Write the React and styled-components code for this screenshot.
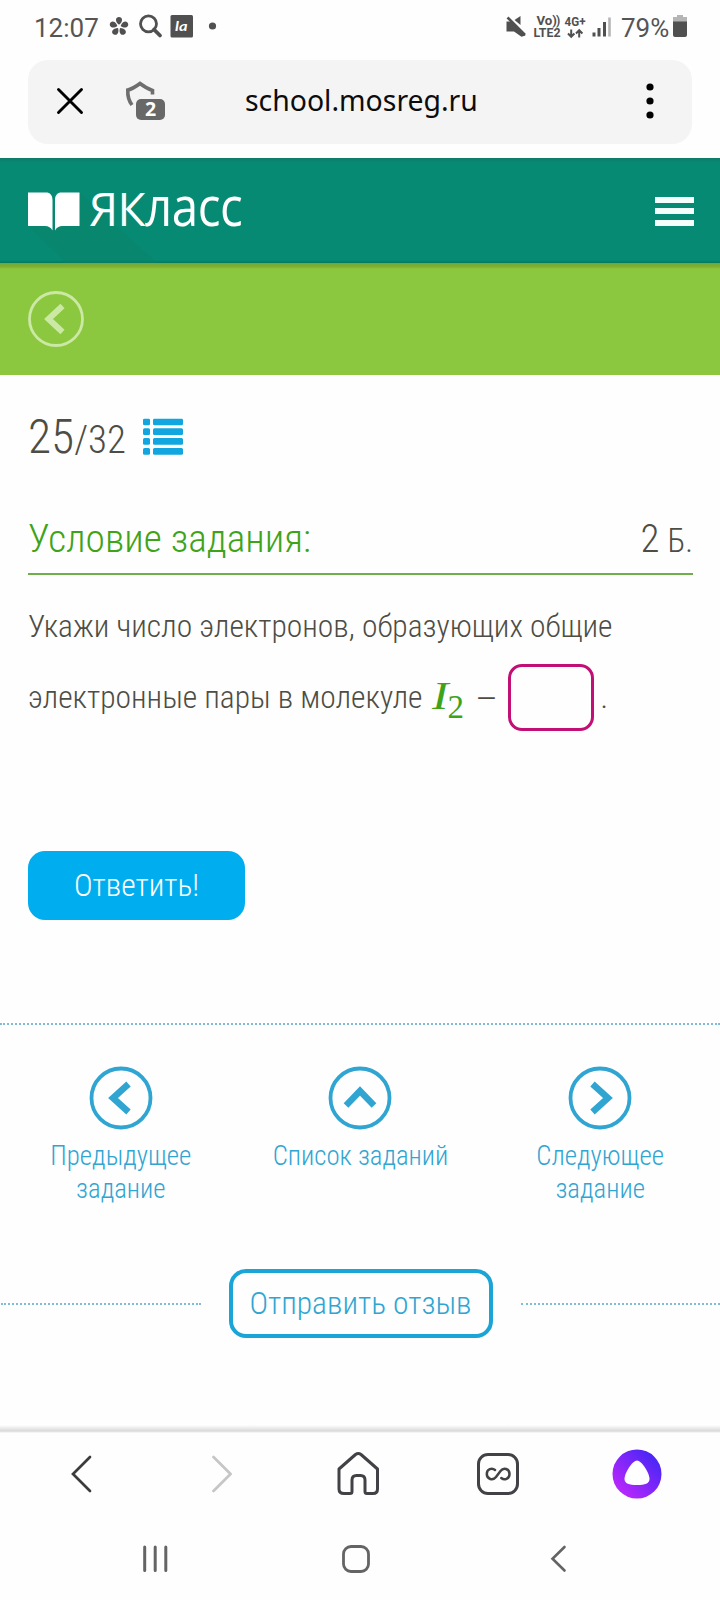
import React from 'react'
import styled, { createGlobalStyle } from 'styled-components';

const GlobalStyle = createGlobalStyle`
  * {
    box-sizing: border-box;
  }
  body {
    margin: 0;
    background: #fefefe;
    font-family: Roboto, sans-serif;
  }
  button {
    padding: 0;
    font-family: inherit;
    cursor: pointer;
  }
  svg {
    display: block;
    flex-shrink: 0;
  }
`

function StatusBar() {
  return (
    <Status>
      <Clock>12:07</Clock>
      <svg width='120' height='32' viewBox='107 10 120 32' fill='#505050'>
        {[0, 72, 144, 216, 288].map((a) => (
          <path key={a} transform={`rotate(${a} 119 26.5)`} d='M119 24.8 C114.6 21.5 115.4 17 119 17 C122.6 17 123.4 21.5 119 24.8 Z' />
        ))}
        <circle cx='148.5' cy='23.8' r='8' fill='none' stroke='#505050' strokeWidth='2.8' />
        <path d='M154 29.5 L160 35.5' stroke='#505050' strokeWidth='3.8' strokeLinecap='round' />
        <rect x='170.5' y='15' width='22.5' height='22.5' rx='1.5' />
        <text x='175' y='31' fill='#fff' fontFamily='Lato, sans-serif' fontWeight='700' fontStyle='italic' fontSize='14' textLength='12.5' lengthAdjust='spacingAndGlyphs'>la</text>
        <circle cx='212.5' cy='26' r='3.6' />
      </svg>
      <Spacer />
      <svg width='110' height='32' viewBox='504.5 10 110 32' fill='#505050'>
        <path d='M507 21.5 H511.5 L526 35.5 L522 36.8 L514.5 31.5 H507 Z' />
        <path d='M515 20 L521 16 V25 Z' />
        <path d='M508 17.5 L525.5 34.8' stroke='#505050' strokeWidth='2.6' />
        <g fontFamily='Roboto, sans-serif' fontWeight='700'>
          <text x='537' y='25' fontSize='12' textLength='20.5' lengthAdjust='spacingAndGlyphs'>Vo)</text>
          <text x='556.5' y='25' fontSize='12'>)</text>
          <text x='534' y='37' fontSize='12.5' textLength='27' lengthAdjust='spacingAndGlyphs'>LTE2</text>
          <text x='565' y='25.5' fontSize='12' textLength='21' lengthAdjust='spacingAndGlyphs'>4G+</text>
        </g>
        <path d='M571.7 29.5 V37 M568.5 33.5 L571.7 36.8 L574.9 33.5 M579.7 37.5 V30.5 M576.5 33.5 L579.7 30.2 L582.9 33.5' fill='none' stroke='#505050' strokeWidth='2' />
        <path d='M593 32.5h3v4h-3z M598 28h3v8.5h-3z M603.5 22h3v14.5h-3z' />
        <path d='M608.7 17.5h2.6v19h-2.6z' fill='#b5b5b5' />
      </svg>
      <Percent>79%</Percent>
      <svg width='15' height='32' viewBox='673 10 15 32'>
        <path d='M677 15h6v2h4v5h-14v-5h4z' fill='#b5b5b5' />
        <path d='M673 21.5h14v13.5a2 2 0 0 1 -2 2h-10a2 2 0 0 1 -2 -2z' fill='#505050' />
      </svg>
    </Status>
  )
}

function AddressBar() {
  return (
    <Address>
      <svg width='28' height='28' viewBox='56 87 28 28'>
        <path d='M58.5 89.5 L81.5 112.5 M81.5 89.5 L58.5 112.5' stroke='#000' strokeWidth='2.9' strokeLinecap='round' />
      </svg>
      <svg width='42' height='42' viewBox='125 81 42 42'>
        <path d='M152.5 95.5 V91.5 C148 90 144 87.5 140 84.5 C136 87.5 132 90 127.8 91 C127.5 97 129 102 132 106' fill='none' stroke='#6e6e6e' strokeWidth='3.6' />
        <rect x='136' y='100' width='29' height='21' rx='5' fill='#686868' />
        <text x='150.5' y='117' textAnchor='middle' fill='#fff' fontFamily='"Noto Sans", sans-serif' fontWeight='700' fontSize='19.5'>2</text>
      </svg>
      <Url>school.mosreg.ru</Url>
      <svg width='8' height='36' viewBox='0 0 8 36'>
        <circle cx='4' cy='4' r='3.6' />
        <circle cx='4' cy='18' r='3.6' />
        <circle cx='4' cy='32' r='3.6' />
      </svg>
    </Address>
  )
}

function SiteHeader() {
  return (
    <Header>
      <Brand>
        <svg width='130' height='105' viewBox='28 158 130 105'>
          <path d='M30 228 L79 192 L157 263 L66 263 Z' fill='#0a8069' opacity='.45' />
          <path d='M28 192.5 H46 C50 192.5 52.5 195 52.5 200 V230.5 C51 227.5 48.5 226 45 226 H28 Z' fill='#fff' />
          <path d='M79.5 192.5 H61.5 C57.5 192.5 55 195 55 200 V230.5 C56.5 227.5 59 226 62.5 226 H79.5 Z' fill='#fff' />
        </svg>
        <BrandName>ЯК<small>ласс</small></BrandName>
      </Brand>
      <Burger>
        <i />
        <i />
        <i />
      </Burger>
    </Header>
  )
}

const arrows = {
  left: 'M7.5 -14 L-8 0 L7.5 14',
  right: 'M-7.5 -14 L8 0 L-7.5 14',
  up: 'M-14 7.5 L0 -7 L14 7.5',
}

function TaskLink({ dir, children }) {
  return (
    <TaskItem>
      <svg width='64' height='64' viewBox='-32 -32 64 64' fill='none' stroke='#30a5d2'>
        <circle r='29.5' strokeWidth='3.8' />
        <path d={arrows[dir]} strokeWidth='6.5' />
      </svg>
      <span>{children}</span>
    </TaskItem>
  )
}

function App() {
  return (
    <Page>
      <GlobalStyle />
      <StatusBar />
      <AddressBar />
      <SiteHeader />
      <GreenBar>
        <svg width='56' height='56' viewBox='-28 -28 56 56' fill='none' stroke='#cbe8a4'>
          <circle r='26.5' strokeWidth='2.8' />
          <path d='M6.5 -13 L-7.5 0 L6.5 13' strokeWidth='6' />
        </svg>
      </GreenBar>

      <Task>
        <Counter>
          <Narrow $size={47.5}>25</Narrow>
          <Narrow $size={39}>/32</Narrow>
          <svg width='41' height='37' viewBox='0 0 41 37' fill='#12a6e0'>
            {[0, 9.8, 19.5, 29.5].map((y) => (
              <g key={y}>
                <rect x='0' y={y} width='7' height='6.8' rx='1.5' />
                <rect x='10' y={y} width='30' height='6.8' rx='1.5' />
              </g>
            ))}
          </svg>
        </Counter>
        <TaskTitle>
          <Narrow $size={39.4} $color='#3fa31a'>Условие задания:</Narrow>
          <Points>
            <Narrow $size={39}>2</Narrow>
            <Narrow $size={32.5}>Б.</Narrow>
          </Points>
        </TaskTitle>
        <Question>
          <Line>
            <Narrow $size={31.5}>Укажи число электронов, образующих общие</Narrow>
          </Line>
          <Line>
            <Narrow $size={31.5}>электронные пары в молекуле</Narrow>
            <Formula><i>I</i><sub>2</sub></Formula>
            <Dash>–</Dash>
            <Answer />
            <Narrow $size={31.5}>.</Narrow>
          </Line>
        </Question>
        <Submit><Narrow $size={31.5} $color='#fff'>Ответить!</Narrow></Submit>
      </Task>

      <Dotted />
      <TaskNav>
        <TaskLink dir='left'><Narrow $size={26.8} $color='#30a5d2'>Предыдущее</Narrow><Narrow $size={26.8} $color='#30a5d2'>задание</Narrow></TaskLink>
        <TaskLink dir='up'><Narrow $size={26.8} $color='#30a5d2'>Список заданий</Narrow></TaskLink>
        <TaskLink dir='right'><Narrow $size={26.8} $color='#30a5d2'>Следующее</Narrow><Narrow $size={26.8} $color='#30a5d2'>задание</Narrow></TaskLink>
      </TaskNav>

      <Feedback>
        <Dotted />
        <FeedbackButton><Narrow $size={31.5} $color='#30a5d2'>Отправить отзыв</Narrow></FeedbackButton>
        <Dotted />
      </Feedback>

      <BarShadow />
      <BrowserNav>
        <svg width='24' height='40' viewBox='69 1454 24 40'>
          <path d='M90 1457 L73 1474 L90 1491' fill='none' stroke='#3c3c3c' strokeWidth='2.7' strokeLinecap='round' />
        </svg>
        <svg width='24' height='40' viewBox='208 1454 24 40'>
          <path d='M213.5 1457 L230.5 1474 L213.5 1491' fill='none' stroke='#c6c6c6' strokeWidth='2.7' strokeLinecap='round' />
        </svg>
        <svg width='46' height='46' viewBox='336 1451 46 46'>
          <path d='M339 1469 L355.5 1454.5 Q358.3 1452.5 361 1454.5 L377.5 1469 V1489 Q377.5 1493.5 373 1493.5 H367 Q365 1493.5 365 1491.5 V1480 Q365 1475.5 360.5 1475.5 H356.5 Q352 1475.5 352 1480 V1491.5 Q352 1493.5 350 1493.5 H344 Q339 1493.5 339 1489 Z' fill='none' stroke='#424246' strokeWidth='3' strokeLinejoin='round' />
        </svg>
        <svg width='44' height='44' viewBox='476 1452 44 44' fill='none' stroke='#424246'>
          <rect x='478.5' y='1454.5' width='39' height='39' rx='9.5' strokeWidth='3' />
          <path d='M495 1470 C492 1467.5 486.8 1469 486.8 1474 C486.8 1479.5 493 1480.8 496 1477 L500.5 1471 C503.5 1467.2 509.5 1468.5 509.5 1474 C509.5 1479 504.3 1480.5 501.3 1478' strokeWidth='2.5' strokeLinecap='round' />
        </svg>
        <svg width='50' height='50' viewBox='0 0 50 50'>
          <defs>
            <linearGradient id='alice' x1='0.15' y1='0.85' x2='0.85' y2='0.15'>
              <stop offset='0' stopColor='#b827fb' />
              <stop offset='1' stopColor='#4a26f6' />
            </linearGradient>
          </defs>
          <circle cx='25' cy='25' r='24.5' fill='url(#alice)' />
          <path d='M25 11.5 C29.5 11.5 37.5 24 37.5 30 C37.5 34.5 33 36 25 36 C17 36 12.5 34.5 12.5 30 C12.5 24 20.5 11.5 25 11.5 Z' fill='#fff' />
        </svg>
      </BrowserNav>
      <SystemNav>
        <svg width='26' height='28' viewBox='142 1545 26 28'>
          <path d='M144.7 1547 V1570.5 M155.2 1547 V1570.5 M165.8 1547 V1570.5' stroke='#646464' strokeWidth='3' strokeLinecap='round' />
        </svg>
        <svg width='28' height='28' viewBox='0 0 28 28'>
          <rect x='1.5' y='1.5' width='25' height='25' rx='7.5' fill='none' stroke='#646464' strokeWidth='2.8' />
        </svg>
        <svg width='18' height='28' viewBox='549 1545 18 28'>
          <path d='M564.5 1547 L552.5 1558.7 L564.5 1570.5' fill='none' stroke='#646464' strokeWidth='2.6' strokeLinecap='round' />
        </svg>
      </SystemNav>
    </Page>
  )
}

export default App

const Page = styled.div`
  width: 720px;
  height: 1600px;
  display: flex;
  flex-direction: column;
  overflow: hidden;
  background: #fefefe;
`

const Narrow = styled.span`
  font-size: ${(p) => p.$size}px;
  font-weight: 300;
  font-stretch: 75%;
  color: ${(p) => p.$color || '#4d4d45'};
  white-space: nowrap;
`

const Status = styled.div`
  height: 59px;
  display: flex;
  align-items: flex-start;
  padding: 10px 32px 0 34px;
`

const Clock = styled.span`
  width: 73px;
  font-size: 26px;
  line-height: 36px;
  color: #555;
`

const Percent = styled.span`
  margin-left: 7px;
  width: 52px;
  font-size: 26px;
  line-height: 36px;
  color: #555;
`

const Spacer = styled.div`
  flex: 1;
`

const Address = styled.div`
  height: 84px;
  margin: 0.5px 28px 14.5px;
  padding: 0 38px 1px 28px;
  display: flex;
  align-items: center;
  border-radius: 20px;
  background: #f4f4f4;

  svg + svg {
    margin-left: 41px;
  }
`

const Url = styled.span`
  flex: 1;
  margin: -2px 0 0 78px;
  font-family: 'Noto Sans', sans-serif;
  font-size: 28.4px;
  color: #0c0c0c;
`

const Header = styled.header`
  height: 105px;
  display: flex;
  justify-content: space-between;
  padding: 0 26px 0 28px;
  background: linear-gradient(#107a68 0, #068a74 5px, #068a74 102px, #04795c 105px);
`

const Brand = styled.div`
  display: flex;
  align-items: flex-start;
`

const BrandName = styled.span`
  margin: 14px 0 0 -69px;
  font-family: 'Open Sans', sans-serif;
  font-size: 46px;
  line-height: 66px;
  letter-spacing: -0.5px;
  white-space: nowrap;
  color: #fff;

  small {
    display: inline-block;
    font-size: 54px;
    transform: scaleX(0.88);
    transform-origin: left;
  }
`

const Burger = styled.div`
  margin-top: 39px;
  display: flex;
  flex-direction: column;
  gap: 5.3px;

  i {
    width: 39px;
    height: 6px;
    background: #f4fffc;
  }
`

const GreenBar = styled.div`
  height: 112px;
  display: flex;
  align-items: center;
  padding: 0 28px;
  background: linear-gradient(#69a843 0, #86b02e 4px, #8cc83f 6px);
`

const Task = styled.main`
  height: 648px;
  padding: 34px 27px 0 28px;
`

const Counter = styled.div`
  height: 63px;
  display: flex;
  align-items: baseline;

  svg {
    margin: 0 0 0 17px;
    transform: translateY(2.5px);
  }
`

const TaskTitle = styled.div`
  height: 103px;
  display: flex;
  align-items: flex-end;
  justify-content: space-between;
  padding-bottom: 11px;
  border-bottom: 2px solid #6fae4b;
`

const Points = styled.div`
  display: flex;
  align-items: baseline;
  gap: 8px;
`

const Question = styled.div`
  padding-top: 16px;
`

const Line = styled.div`
  height: 71px;
  display: flex;
  align-items: center;
`

const Formula = styled.span`
  width: 44px;
  margin: -6px 0 0 9px;
  font-family: 'Liberation Serif', serif;
  font-size: 41px;
  line-height: 44px;
  white-space: nowrap;
  color: #3fa31a;

  i {
    display: inline-block;
    width: 16px;
    transform: scaleX(1.2);
    transform-origin: left;
  }
  sub {
    font-size: 33px;
    line-height: 0;
    vertical-align: -9px;
  }
`

const Dash = styled.span`
  width: 32px;
  font-size: 34px;
  font-weight: 300;
  color: #4d4d45;
`

const Answer = styled.div`
  width: 86px;
  height: 67px;
  margin-right: 7px;
  border: 3px solid #c20f76;
  border-radius: 14px;
`

const Submit = styled.button`
  display: block;
  width: 217px;
  height: 69px;
  margin-top: 118px;
  border: 0;
  border-radius: 17px;
  background: #00aeef;
`

const Dotted = styled.div`
  flex: 1;
  flex-basis: auto;
  max-height: 2px;
  border-top: 2px dotted #7fbcd8;
`

const TaskNav = styled.nav`
  height: 203px;
  padding: 41px 0 0 1px;
  display: grid;
  grid-template-columns: repeat(3, 1fr);
`

const TaskItem = styled.a`
  display: flex;
  flex-direction: column;
  align-items: center;
  gap: 10px;

  span {
    display: flex;
    flex-direction: column;
    align-items: center;
    line-height: 33px;
  }
`

const Feedback = styled.div`
  height: 69px;
  margin-top: 41px;
  display: flex;
  align-items: center;
  gap: 28px;
  padding-left: 1px;
`

const FeedbackButton = styled.button`
  width: 264px;
  height: 69px;
  border: 4px solid #1aa5d6;
  border-radius: 17px;
  background: transparent;
`

const BarShadow = styled.div`
  height: 8px;
  margin-top: auto;
  background: linear-gradient(#fefefe 0, #d9d9d9 6px, #fefefe 8px);
`

const BrowserNav = styled.nav`
  height: 83px;
  display: grid;
  grid-template-columns: repeat(5, 139px);
  align-items: center;
  justify-items: center;
  padding: 0 0 1px 11px;
`

const SystemNav = styled.nav`
  height: 84px;
  display: grid;
  grid-template-columns: repeat(3, 201.5px);
  align-items: center;
  justify-items: center;
  padding: 1px 0 0 54px;
`
